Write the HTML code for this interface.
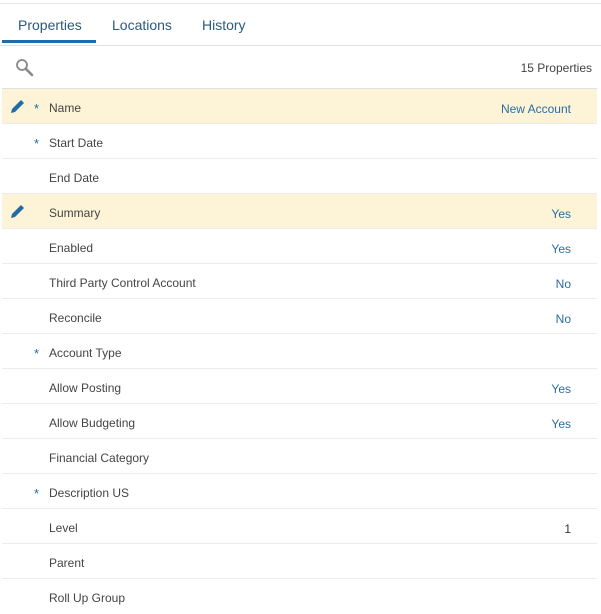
<!DOCTYPE html>
<html><head><style>
body{margin:0;width:601px;height:614px;background:#fff;font-family:"Liberation Sans",sans-serif;position:relative;overflow:hidden;color:#333}
.topline{position:absolute;left:0;right:0;top:3px;height:1px;background:#e8e8e8}
.tab{position:absolute;top:17px;font-size:14px;color:#2b5a7e}
.ul{position:absolute;left:2px;top:40px;width:94px;height:3px;background:#1f6ca6}
.tabline{position:absolute;left:0;right:0;top:45px;height:1px;background:#e0e0e0}
.count{position:absolute;right:9px;top:61px;font-size:12px;color:#444}
.row{position:absolute;left:2px;width:595px;height:34px;border-bottom:1px solid #ececec}
.hl{background:#fdf3d7}
.lab{position:absolute;left:47px;top:12px;font-size:12px;color:#444}
.ast{position:absolute;left:32px;top:12px;font-size:13px;color:#1f6ca6}
.val{position:absolute;right:26px;top:13px;font-size:12px;color:#2b6da3}
.pen{position:absolute;left:8px;top:9px}
</style></head><body>
<div class="topline"></div>
<div class="tab" style="left:18px">Properties</div>
<div class="tab" style="left:112px">Locations</div>
<div class="tab" style="left:202px">History</div>
<div class="ul"></div>
<div class="tabline"></div>
<svg style="position:absolute;left:15px;top:58px" width="20" height="20" viewBox="0 0 20 20"><circle cx="7" cy="7" r="5" fill="none" stroke="#888" stroke-width="1.8"/><path d="M11 11 L17 17" stroke="#888" stroke-width="2.6" stroke-linecap="round"/></svg>
<div class="count">15 Properties</div>

<div class="row hl" style="border-top:1px solid #e0e0e0;top:88px"><svg class="pen" width="16" height="16" viewBox="0 0 16 16"><path d="M1 15 L2 11 L11 2 L14 5 L5 14 Z" fill="#1f6ca6"/></svg><span class="ast">*</span><span class="lab">Name</span><span class="val">New Account</span></div>
<div class="row" style="top:124px"><span class="ast">*</span><span class="lab">Start Date</span></div>
<div class="row" style="top:159px"><span class="lab">End Date</span></div>
<div class="row hl" style="top:194px"><svg class="pen" width="16" height="16" viewBox="0 0 16 16"><path d="M1 15 L2 11 L11 2 L14 5 L5 14 Z" fill="#1f6ca6"/></svg><span class="lab">Summary</span><span class="val">Yes</span></div>
<div class="row" style="top:229px"><span class="lab">Enabled</span><span class="val">Yes</span></div>
<div class="row" style="top:264px"><span class="lab">Third Party Control Account</span><span class="val">No</span></div>
<div class="row" style="top:299px"><span class="lab">Reconcile</span><span class="val">No</span></div>
<div class="row" style="top:334px"><span class="ast">*</span><span class="lab">Account Type</span></div>
<div class="row" style="top:369px"><span class="lab">Allow Posting</span><span class="val">Yes</span></div>
<div class="row" style="top:404px"><span class="lab">Allow Budgeting</span><span class="val">Yes</span></div>
<div class="row" style="top:439px"><span class="lab">Financial Category</span></div>
<div class="row" style="top:474px"><span class="ast">*</span><span class="lab">Description US</span></div>
<div class="row" style="top:509px"><span class="lab">Level</span><span class="val" style="color:#333">1</span></div>
<div class="row" style="top:544px"><span class="lab">Parent</span></div>
<div class="row" style="top:579px;border-bottom:none"><span class="lab">Roll Up Group</span></div>
</body></html>
